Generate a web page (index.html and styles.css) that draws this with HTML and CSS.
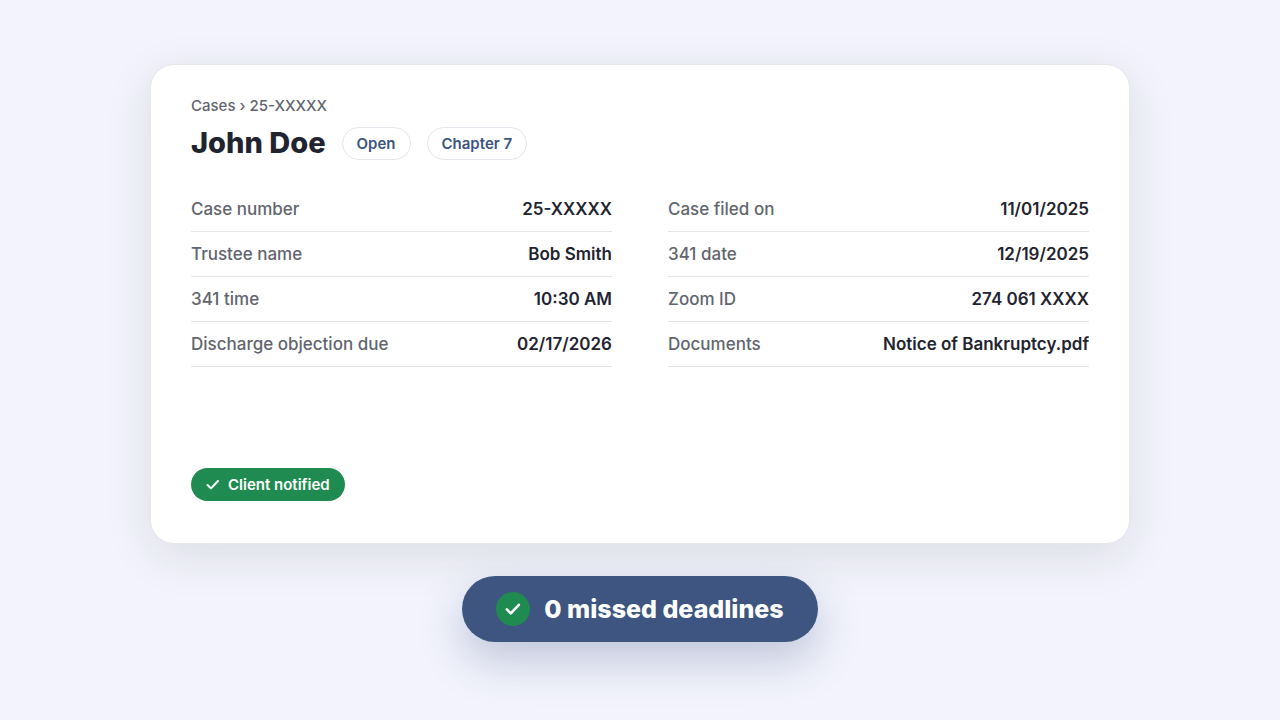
FILE: index.html
```html
<!DOCTYPE html>
<html lang="en">
<head>
  <meta charset="UTF-8">
  <meta name="viewport" content="width=device-width, initial-scale=1.0">
  <title>John Doe - Case 25-XXXXX</title>
  <link rel="stylesheet" href="styles.css">
</head>
<body>
  <main class="card">
    <nav class="breadcrumb"><a href="#">Cases</a> › 25-XXXXX</nav>
    <header class="title-row">
      <h1>John Doe</h1>
      <span class="tag">Open</span>
      <span class="tag">Chapter 7</span>
    </header>

    <div class="details">
      <dl>
        <div class="row"><dt>Case number</dt><dd>25-XXXXX</dd></div>
        <div class="row"><dt>Trustee name</dt><dd>Bob Smith</dd></div>
        <div class="row"><dt>341 time</dt><dd>10:30 AM</dd></div>
        <div class="row"><dt>Discharge objection due</dt><dd>02/17/2026</dd></div>
      </dl>
      <dl>
        <div class="row"><dt>Case filed on</dt><dd>11/01/2025</dd></div>
        <div class="row"><dt>341 date</dt><dd>12/19/2025</dd></div>
        <div class="row"><dt>Zoom ID</dt><dd>274 061 XXXX</dd></div>
        <div class="row"><dt>Documents</dt><dd>Notice of Bankruptcy.pdf</dd></div>
      </dl>
    </div>

    <div class="notified">
      <svg width="14" height="14" viewBox="0 0 14 14"><path d="M1.5 7 5 10.4 12 3"/></svg>
      <span>Client notified</span>
    </div>
  </main>

  <div class="summary">
    <span class="summary-icon">
      <svg width="18" height="18" viewBox="0 0 18 18"><path d="M2.8 9.3 6.8 13.3 14.8 4.8"/></svg>
    </span>
    <span>0 missed deadlines</span>
  </div>
</body>
</html>
```
FILE: styles.css
```css
* { box-sizing: border-box; }
body { margin: 0; min-height: 100vh; padding: 64px 150px; display: flex; flex-direction: column; align-items: center; gap: 32px; font-family: Inter, "Liberation Sans", sans-serif; background: #f2f3fc; color: #1f2430; }
.card { width: 100%; max-width: 980px; min-height: 480px; padding: 31px 40px 42px; display: flex; flex-direction: column; background: #fff; border: 1px solid #e5e7eb; border-radius: 24px; box-shadow: 0 12px 48px rgba(31,40,30,0.1); }
.breadcrumb { font-size: 15px; line-height: 20px; font-weight: 500; color: #62656d; }
.breadcrumb a { color: inherit; text-decoration: none; }
.title-row { display: flex; align-items: center; gap: 16px; margin-top: 7px; }
h1 { margin: 0; font-size: 29px; line-height: 40px; font-weight: 800; }
.tag { padding: 0 14px; border: 1px solid #e3e6ea; border-radius: 17px; font-size: 15px; line-height: 31px; font-weight: 600; color: #3b5580; }
.details { display: grid; grid-template-columns: 1fr 1fr; gap: 56px; margin-top: 24px; }
dl { margin: 0; }
.row { display: flex; justify-content: space-between; align-items: center; height: 45px; border-bottom: 1px solid #e3e4e6; font-size: 17px; line-height: 24px; }
dt { font-weight: 500; color: #62656d; }
dd { margin: 0; font-weight: 600; }
.notified { display: flex; align-items: center; align-self: flex-start; gap: 8px; margin-top: auto; padding: 0 15px; border-radius: 17px; background: #1f8b50; color: #fff; font-size: 15px; line-height: 33px; font-weight: 600; }
svg { display: block; fill: none; stroke: #fff; stroke-width: 2; stroke-linecap: round; stroke-linejoin: round; }
.summary { display: flex; align-items: center; gap: 14px; height: 66px; padding: 0 34px; border-radius: 33px; background: #3d5580; color: #fff; font-size: 25px; line-height: 32px; font-weight: 800; box-shadow: 0 18px 44px rgba(60,84,128,0.28); }
.summary-icon { display: grid; place-items: center; width: 34px; height: 34px; border-radius: 50%; background: #1f8b50; }
.summary-icon svg { stroke-width: 2.6; }
```
